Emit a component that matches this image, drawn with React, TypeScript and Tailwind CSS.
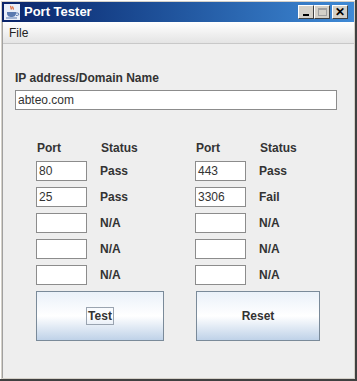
import React from 'react';

const font = { fontFamily: '"Liberation Sans", Arial, sans-serif' };

type Row = { left: [string, string]; right: [string, string] };

const rows: Row[] = [
  { left: ['80', 'Pass'], right: ['443', 'Pass'] },
  { left: ['25', 'Pass'], right: ['3306', 'Fail'] },
  { left: ['', 'N/A'], right: ['', 'N/A'] },
  { left: ['', 'N/A'], right: ['', 'N/A'] },
  { left: ['', 'N/A'], right: ['', 'N/A'] },
];

function PortField({ value }: { value: string }) {
  return (
    <div className="w-[51px] h-[20px] bg-white border border-[#8c8c8c] pl-[2px] text-[12px] leading-[18px] text-[#333]">
      {value}
    </div>
  );
}

function PortCell({ port, status }: { port: string; status: string }) {
  return (
    <div className="flex items-center w-[160px] h-[20px]">
      <PortField value={port} />
      <span className="ml-[13px] text-[12px] font-bold text-[#333]">{status}</span>
    </div>
  );
}

function TitleButton({ children }: { children: React.ReactNode }) {
  return (
    <div className="w-[16px] h-[14px] bg-[#d4d0c8] border-t border-l border-t-white border-l-white border-r border-b border-r-[#404040] border-b-[#404040] flex items-center justify-center">
      {children}
    </div>
  );
}

function JavaIcon() {
  return (
    <svg width="16" height="16" viewBox="0 0 16 16">
      <rect x="0" y="0" width="16" height="16" fill="#e8eef8" />
      <path d="M7 2c-1 1 1 2 0 3.5M9 2.5c-1 1 1 2 0 3" stroke="#e0561a" strokeWidth="1.2" fill="none" />
      <path d="M3 8h9v1c0 3-2 4-4.5 4S3 12 3 9z" fill="#5a7ab0" />
      <path d="M12 9h1.5a1.2 1.2 0 010 2.4H12" stroke="#5a7ab0" fill="none" />
      <rect x="2" y="13.5" width="11" height="1" fill="#5a7ab0" />
    </svg>
  );
}

export default function App() {
  return (
    <div
      className="w-[357px] h-[381px] bg-[#d4d0c8] border-r-[2px] border-b-[2px] border-r-[#404040] border-b-[#404040] flex flex-col"
      style={font}
    >
      <div className="flex flex-col flex-1 border-t border-l border-white pl-[1px]">
        {/* title bar */}
        <div className="h-[20px] mt-[1px] mr-[1px] flex items-center pl-[2px] pr-[6px] bg-gradient-to-r from-[#0a246a] to-[#3f8ad6]">
          <JavaIcon />
          <span className="ml-[4px] text-white text-[13px] font-bold">Port Tester</span>
          <div className="ml-auto flex items-center">
            <TitleButton>
              <div className="w-[6px] h-[2px] bg-black mt-[6px]" />
            </TitleButton>
            <TitleButton>
              <div className="w-[9px] h-[8px] border border-[#a0a0a0] border-t-2" />
            </TitleButton>
            <div className="w-[2px]" />
            <TitleButton>
              <span className="text-[12px] font-bold leading-none text-black">✕</span>
            </TitleButton>
          </div>
        </div>
        {/* body */}
        <div className="flex-1 flex flex-col bg-[#eeeeee] border-l border-l-[#a0a0a0] mr-[1px] mb-[1px]">
          {/* menu bar */}
          <div className="h-[22px] bg-gradient-to-b from-white to-[#e4e4e4] border-b border-b-[#c8c8c8] flex items-center pl-[6px] text-[12px] text-[#222]">
            File
          </div>
          <div className="flex flex-col pl-[12px] pt-[26px]">
            <span className="text-[12px] font-bold text-[#333] leading-[16px]">IP address/Domain Name</span>
            <div className="mt-[4px] w-[322px] h-[20px] bg-white border border-[#8c8c8c] pl-[2px] text-[12px] leading-[18px] text-[#333]">
              abteo.com
            </div>
            <div className="flex pl-[21px] mt-[30px]">
              <div className="flex w-[160px] text-[12px] font-bold text-[#333] leading-[16px]">
                <span className="ml-[1px] w-[64px]">Port</span>
                <span>Status</span>
              </div>
              <div className="flex w-[160px] text-[12px] font-bold text-[#333] leading-[16px]">
                <span className="ml-[1px] w-[64px]">Port</span>
                <span>Status</span>
              </div>
            </div>
            <div className="flex flex-col gap-[6px] pl-[21px] mt-[5px]">
              {rows.map((r, i) => (
                <div key={i} className="flex">
                  <PortCell port={r.left[0]} status={r.left[1]} />
                  <PortCell port={r.right[0]} status={r.right[1]} />
                </div>
              ))}
            </div>
            <div className="flex pl-[21px] mt-[6px]">
              <div className="w-[160px]">
                <button className="w-[128px] h-[50px] border border-[#7a8a99] bg-gradient-to-b from-[#eaf1f9] via-white to-[#bfd2e8] flex items-center justify-center text-[12px] font-bold text-[#333]">
                  <span className="border border-[#9aa4b0] px-[1px] leading-[16px]">Test</span>
                </button>
              </div>
              <button className="w-[124px] h-[50px] border border-[#7a8a99] bg-gradient-to-b from-[#eaf1f9] via-white to-[#bfd2e8] flex items-center justify-center text-[12px] font-bold text-[#333]">
                Reset
              </button>
            </div>
          </div>
        </div>
      </div>
    </div>
  );
}
